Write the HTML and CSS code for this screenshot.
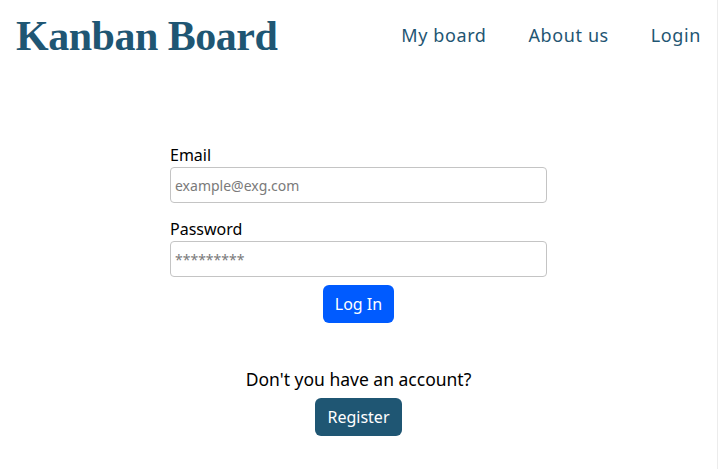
FILE: index.html
```html
<!DOCTYPE html>
<html lang="en">
<head>
<meta charset="utf-8">
<title>Kanban Board - Login</title>
<link rel="stylesheet" href="styles.css">
</head>
<body>
<div class="page">
  <header class="header">
    <h1 class="brand">Kanban Board</h1>
    <nav class="nav">
      <a class="nav-link" href="#">My board</a>
      <a class="nav-link" href="#">About us</a>
      <a class="nav-link" href="#">Login</a>
    </nav>
  </header>
  <main class="main">
    <form class="login-form">
      <label class="field-label" for="email">Email</label>
      <input class="field-input" id="email" type="email" placeholder="example@exg.com">
      <label class="field-label" for="password">Password</label>
      <input class="field-input" id="password" type="password" placeholder="*********">
      <div class="actions">
        <button class="btn btn-primary" type="button">Log In</button>
      </div>
    </form>
    <section class="register">
      <p class="register-text">Don't you have an account?</p>
      <button class="btn btn-dark" type="button">Register</button>
    </section>
  </main>
</div>
</body>
</html>
```

FILE: styles.css
```css
* { box-sizing: border-box; }
html, body { margin: 0; padding: 0; background: #fff; }
body {
  font-family: "Noto Sans", "Open Sans", sans-serif;
  color: #000;
  height: 469px;
  overflow: hidden;
}
.page {
  width: 718px;
  height: 469px;
  border-right: 1px solid #ececec;
}
.header {
  display: flex;
  justify-content: space-between;
  align-items: flex-start;
  padding: 0 16px 0 16px;
}
.brand {
  margin: 0;
  padding-top: 10px;
  font-family: "Liberation Serif", "DejaVu Serif", serif;
  font-weight: bold;
  font-size: 42px;
  line-height: 52px;
  letter-spacing: -0.5px;
  color: #1f5673;
}
.nav {
  display: flex;
  gap: 42px;
  padding-top: 22px;
}
.nav-link {
  font-family: "Noto Sans", "Open Sans", sans-serif;
  font-size: 18px;
  line-height: 26px;
  letter-spacing: 0.6px;
  color: #1f5673;
  text-decoration: none;
}
.main {
  display: flex;
  flex-direction: column;
  align-items: center;
  padding-top: 81px;
}
.login-form {
  width: 377px;
  display: flex;
  flex-direction: column;
}
.field-label {
  font-size: 16px;
  line-height: 24px;
}
.field-input {
  height: 36px;
  margin: 0 0 14px;
  padding: 0 4px;
  border: 1px solid #c4c4c4;
  border-radius: 4px;
  font-family: "Noto Sans", "Open Sans", sans-serif;
  font-size: 14px;
  color: #333;
}
.field-input::placeholder { color: #7a7a7a; }
.field-input:last-of-type { margin-bottom: 8px; }
.actions {
  display: flex;
  justify-content: center;
}
.btn {
  font-family: "Noto Sans", "Open Sans", sans-serif;
  font-size: 16px;
  line-height: 24px;
  padding: 6px 11px;
  border: 1px solid transparent;
  border-radius: 6px;
  color: #fff;
  cursor: pointer;
}
.btn-primary { background: #005bff; }
.btn-dark { background: #1f5673; }
.register {
  display: flex;
  flex-direction: column;
  align-items: center;
  padding-top: 43px;
}
.register-text {
  margin: 0 0 6px;
  font-size: 17.5px;
  line-height: 26px;
}
```
